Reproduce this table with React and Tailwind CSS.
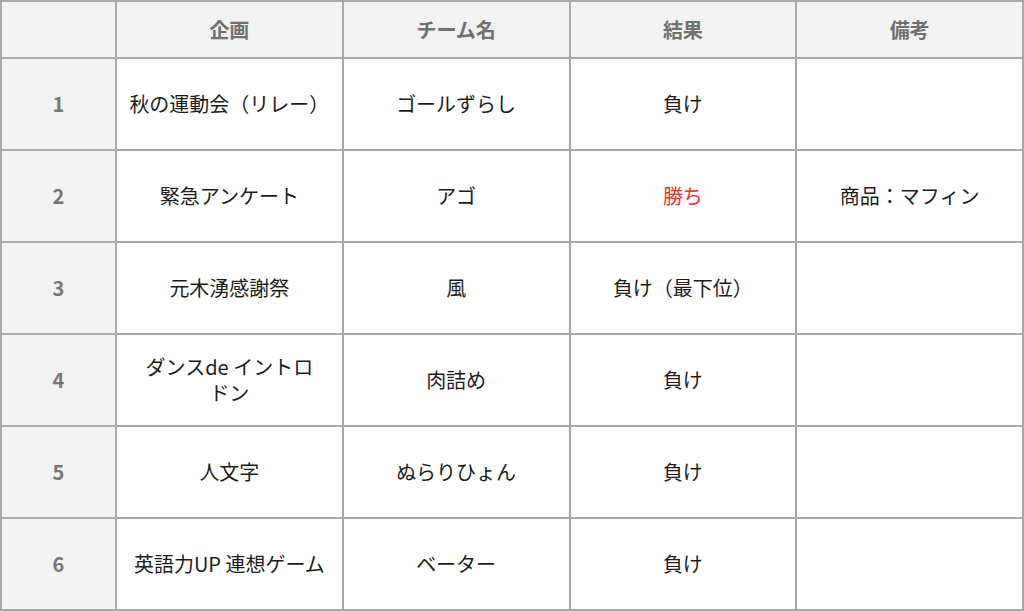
const headers = ["", "企画", "チーム名", "結果", "備考"];

const rows = [
  { no: "1", plan: "秋の運動会（リレー）", team: "ゴールずらし", result: "負け", note: "" },
  { no: "2", plan: "緊急アンケート", team: "アゴ", result: "勝ち", win: true, note: "商品：マフィン" },
  { no: "3", plan: "元木湧感謝祭", team: "風", result: "負け（最下位）", note: "" },
  {
    no: "4",
    plan: (
      <>
        ダンスde イントロ
        <br />
        ドン
      </>
    ),
    team: "肉詰め",
    result: "負け",
    note: "",
  },
  { no: "5", plan: "人文字", team: "ぬらりひょん", result: "負け", note: "" },
  { no: "6", plan: "英語力UP 連想ゲーム", team: "ベーター", result: "負け", note: "" },
];

const Cell = ({ children, className = "" }) => (
  <div
    className={`flex items-center justify-center whitespace-nowrap px-1 text-center leading-[26px] ${className}`}
  >
    {children}
  </div>
);

export default function App() {
  return (
    <div
      className="h-[611px] w-[1024px] bg-white text-[20px] text-[#1c1c1c]"
      style={{ fontFamily: '"Noto Sans CJK JP", "Noto Sans", sans-serif' }}
    >
      <div className="grid w-[1024px] grid-cols-[113px_repeat(4,1fr)] grid-rows-[55px_repeat(6,90px)] gap-[2px] bg-[#a9a9a9] p-[2px]">
        {headers.map((h, i) => (
          <Cell key={i} className="bg-[#f2f2f2] font-bold text-[#707070]">
            {h}
          </Cell>
        ))}
        {rows.map((r) => (
          <div key={r.no} className="contents">
            <Cell className="bg-[#f2f2f2] font-semibold text-[#777]">{r.no}</Cell>
            <Cell className="bg-white">{r.plan}</Cell>
            <Cell className="bg-white">{r.team}</Cell>
            <Cell className={`bg-white ${r.win ? "text-[#ff2a1f]" : ""}`}>{r.result}</Cell>
            <Cell className="bg-white">{r.note}</Cell>
          </div>
        ))}
      </div>
    </div>
  );
}
